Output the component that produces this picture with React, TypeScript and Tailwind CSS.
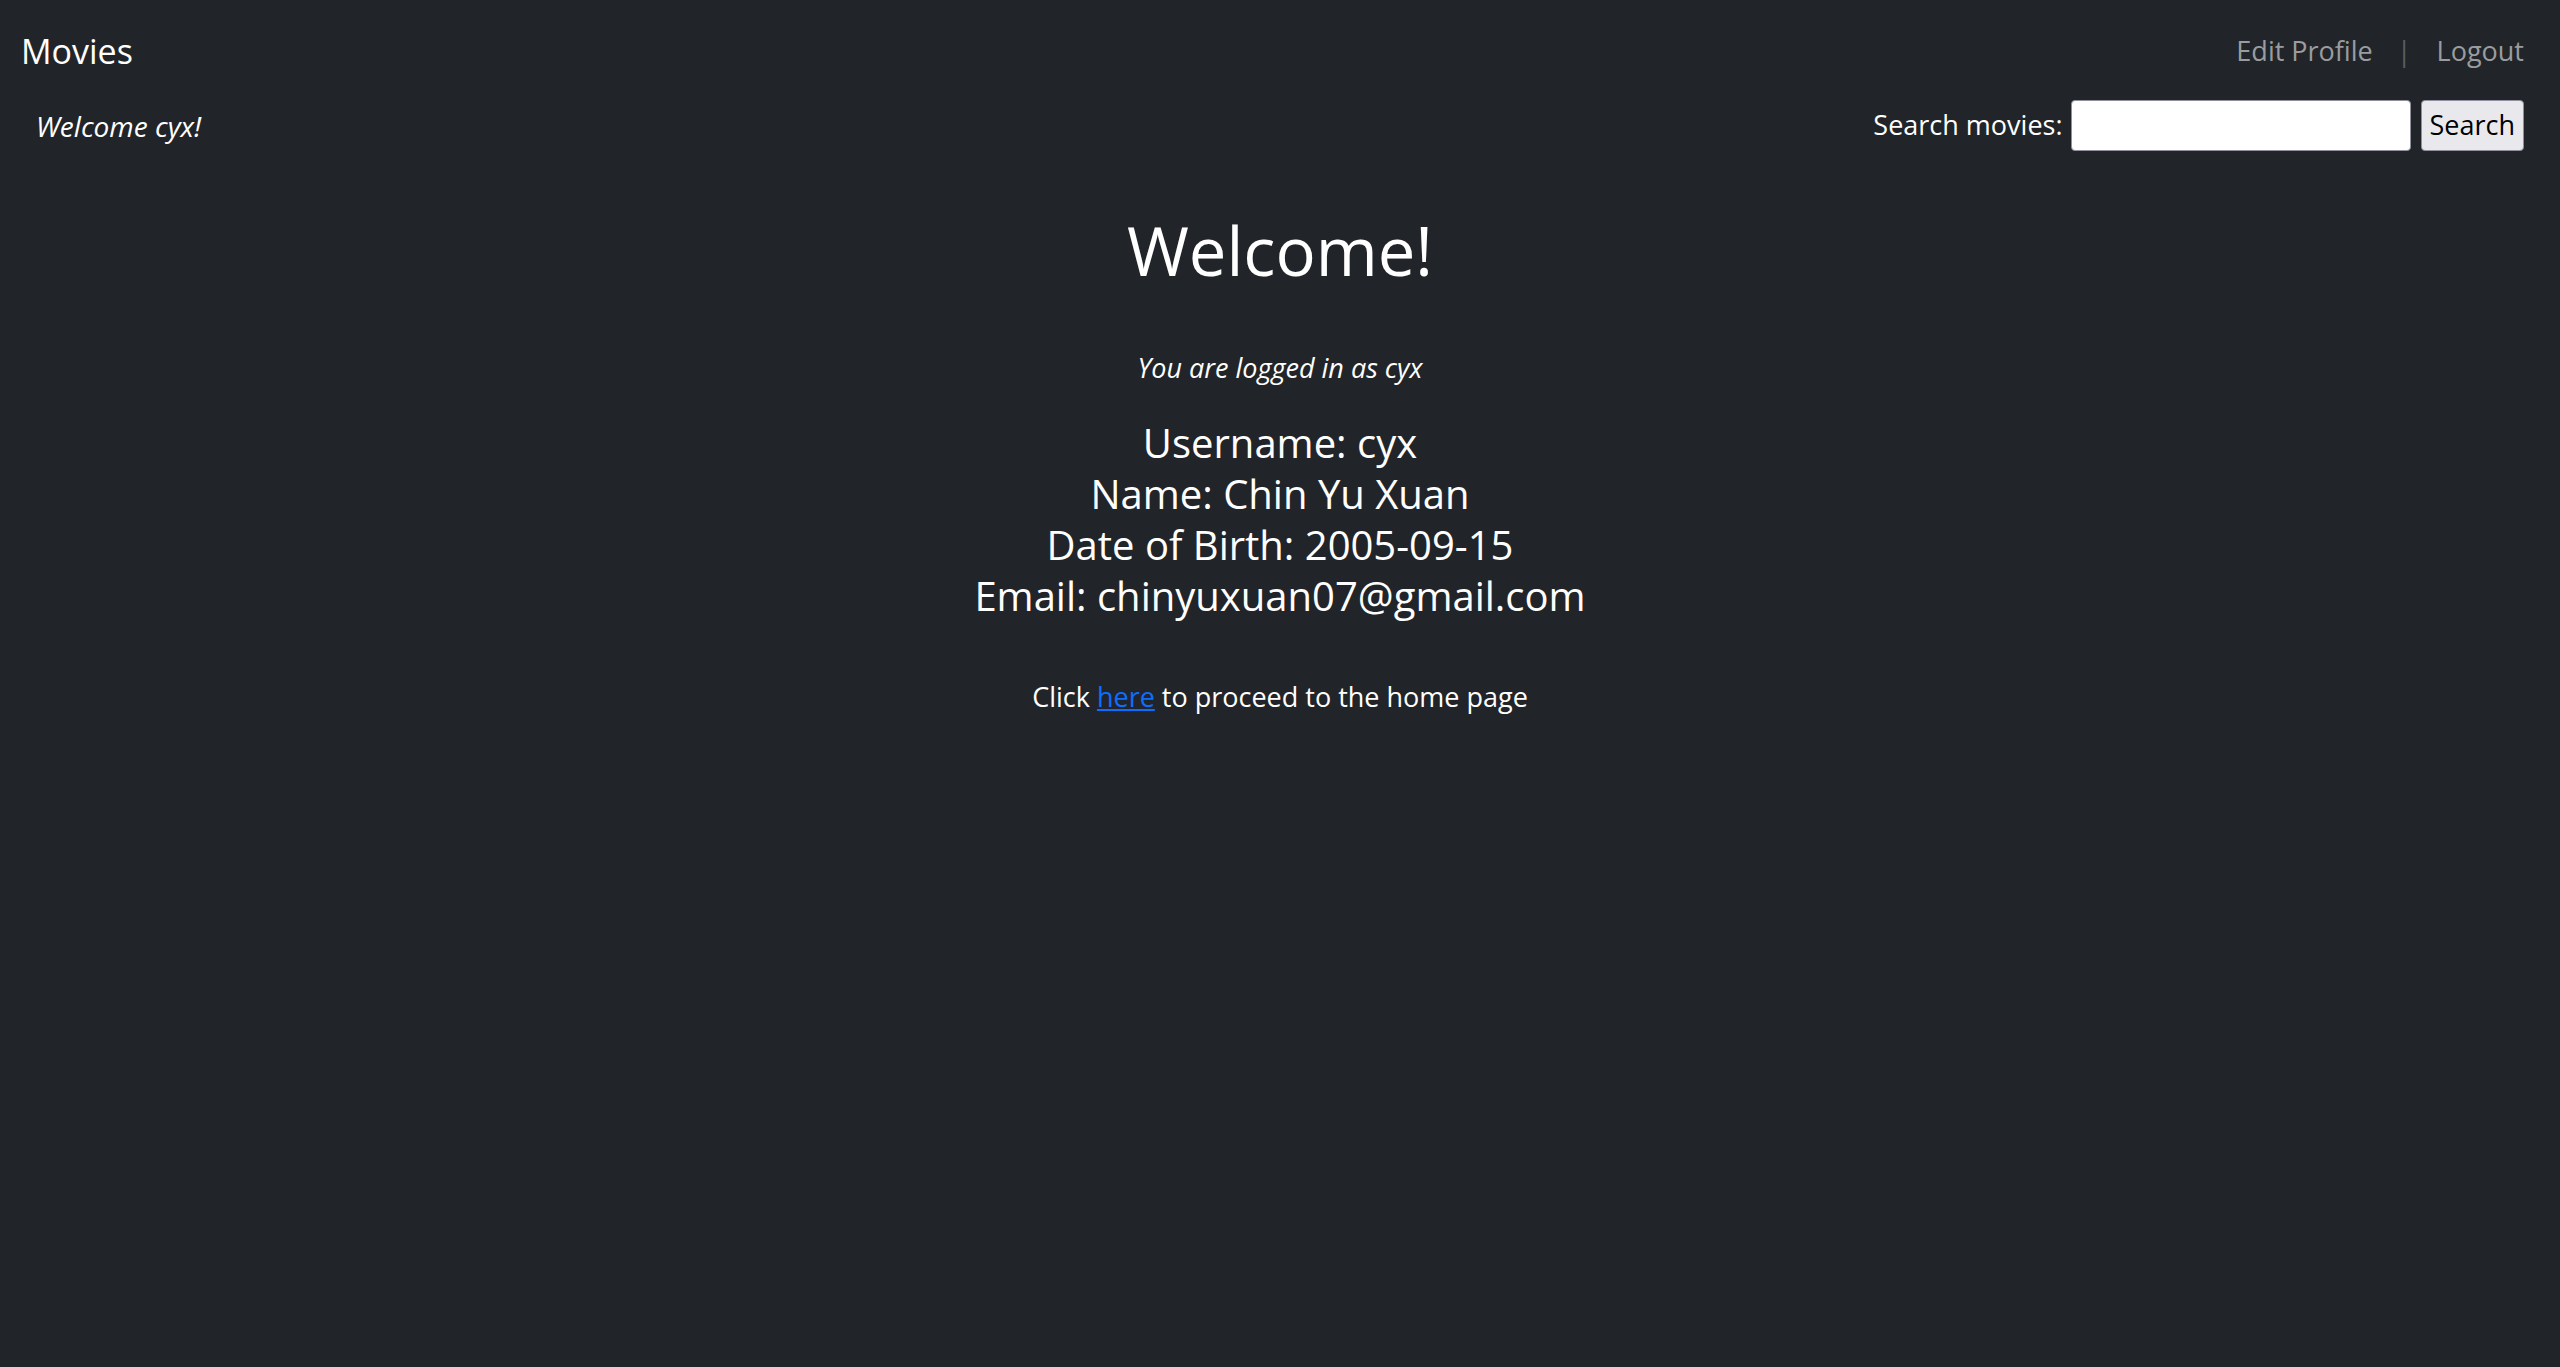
export default function App() {
  return (
    <div className="min-h-screen bg-[#212529] text-white font-['Open_Sans','Noto_Sans',sans-serif]">
      <nav className="flex items-center justify-between pl-[21px] pr-[36px] pt-[26px]">
        <a href="#" className="text-[34px] leading-[1.5] text-white">Movies</a>
        <div className="flex items-center text-[27px] leading-[1.5] text-[#9a9c9f]">
          <a href="#">Edit Profile</a>
          <span className="ml-[24px] mr-[25px] text-[#5b5e62]">|</span>
          <a href="#">Logout</a>
        </div>
      </nav>

      <div className="flex items-center justify-between pl-[36px] pr-[36px] pt-[23px]">
        <p className="text-[28px] italic leading-[1.5]">Welcome cyx!</p>
        <form className="flex items-center" onSubmit={(e) => e.preventDefault()}>
          <label htmlFor="q" className="mr-[8px] text-[27px]">Search movies:</label>
          <input
            id="q"
            type="text"
            className="h-[51px] w-[340px] rounded-[4px] border border-[#8f8f9d] bg-white px-2 text-[24px] text-black outline-none"
          />
          <button className="ml-[10px] h-[51px] rounded-[4px] border border-[#8f8f9d] bg-[#e9e9ed] px-[8px] text-[27px] text-black">
            Search
          </button>
        </form>
      </div>

      <main className="pt-[59px] text-center">
        <h1 className="text-[67px] leading-[1.2]">Welcome!</h1>
        <p className="mt-[58px] text-[27px] italic leading-[1.5]">You are logged in as cyx</p>
        <h4 className="mt-[28px] text-[40px] leading-[51px]">
          Username: cyx<br />
          Name: Chin Yu Xuan<br />
          Date of Birth: 2005-09-15<br />
          Email: chinyuxuan07@gmail.com
        </h4>
        <p className="mt-[56px] text-[27px] leading-[1.5]">
          Click <a href="#" className="text-[#0d6efd] underline">here</a> to proceed to the home page
        </p>
      </main>
    </div>
  );
}
